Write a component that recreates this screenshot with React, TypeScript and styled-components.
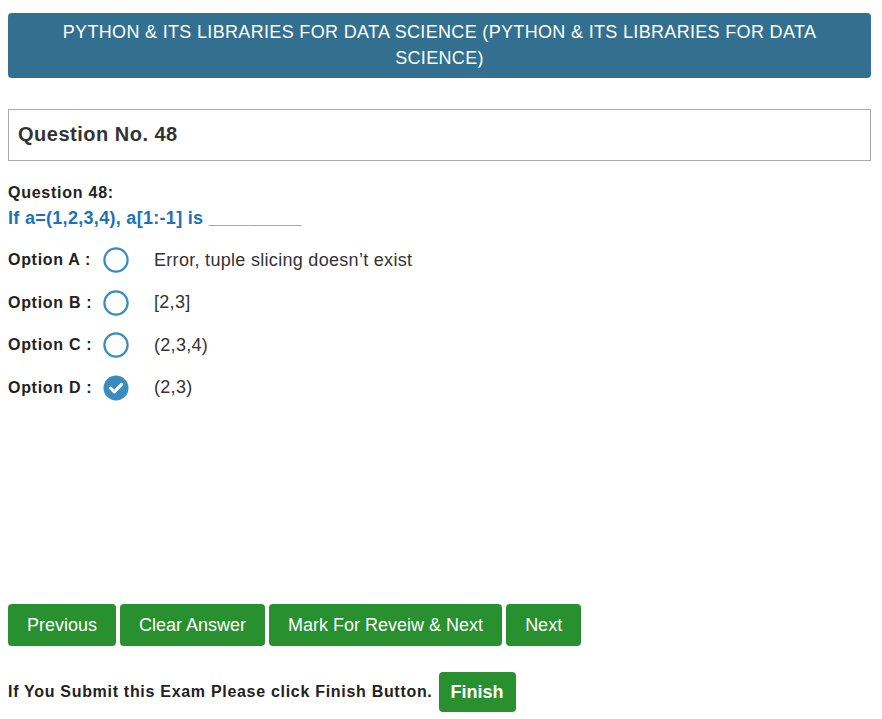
import { FC, useState } from 'react';
import styled, { createGlobalStyle } from 'styled-components';

const GlobalStyle = createGlobalStyle`
  body {
    margin: 8px;
    background: #fff;
    font-family: 'Liberation Sans', Arial, sans-serif;
    color: #333;
  }
`;

interface OptionType {
  key: string;
  text: string;
}

const options: OptionType[] = [
  { key: 'A', text: 'Error, tuple slicing doesn’t exist' },
  { key: 'B', text: '[2,3]' },
  { key: 'C', text: '(2,3,4)' },
  { key: 'D', text: '(2,3)' },
];

const RadioIcon: FC<{ checked: boolean }> = ({ checked }) =>
  checked ? (
    <svg width="26" height="26" viewBox="0 0 26 26">
      <circle cx="13" cy="13" r="12.5" fill="#3a8cc0" />
      <path
        d="M7.5 13.2 L11.3 16.8 L18.6 9.4"
        fill="none"
        stroke="#fff"
        strokeWidth="3.2"
        strokeLinecap="round"
        strokeLinejoin="round"
      />
    </svg>
  ) : (
    <svg width="26" height="26" viewBox="0 0 26 26">
      <circle cx="13" cy="13" r="11.6" fill="#fff" stroke="#3a8cc0" strokeWidth="2.2" />
    </svg>
  );

const App: FC = () => {
  const [selected, setSelected] = useState('D');

  return (
    <Page>
      <GlobalStyle />
      <Header>
        PYTHON &amp; ITS LIBRARIES FOR DATA SCIENCE (PYTHON &amp; ITS LIBRARIES FOR DATA SCIENCE)
      </Header>

      <QuestionBox>Question No. 48</QuestionBox>

      <QuestionTitle>Question 48:</QuestionTitle>
      <QuestionText>If a=(1,2,3,4), a[1:-1] is _________</QuestionText>

      <OptionList>
        {options.map((opt) => (
          <OptionRow key={opt.key} onClick={() => setSelected(opt.key)}>
            <OptionLabel>Option {opt.key} :</OptionLabel>
            <RadioIcon checked={selected === opt.key} />
            <OptionText>{opt.text}</OptionText>
          </OptionRow>
        ))}
      </OptionList>

      <ButtonBar>
        <GreenButton>Previous</GreenButton>
        <GreenButton onClick={() => setSelected('')}>Clear Answer</GreenButton>
        <GreenButton>Mark For Reveiw &amp; Next</GreenButton>
        <GreenButton>Next</GreenButton>
      </ButtonBar>

      <FinishRow>
        <FinishText>If You Submit this Exam Please click Finish Button.</FinishText>
        <GreenButton $bold>Finish</GreenButton>
      </FinishRow>
    </Page>
  );
};

export default App;

const Page = styled.div`
  width: 863px;
  padding-top: 5px;
`;

const Header = styled.div`
  background-color: #337090;
  color: #fff;
  border-radius: 4px;
  text-align: center;
  font-size: 18px;
  letter-spacing: 0.33px;
  line-height: 26px;
  padding: 6px 30px 7px;
`;

const QuestionBox = styled.div`
  margin-top: 31px;
  border: 1px solid #aaa;
  padding: 12px 9px 13px;
  font-size: 20px;
  font-weight: bold;
  letter-spacing: 0.5px;
  line-height: 25px;
  color: #333;
`;

const QuestionTitle = styled.div`
  margin-top: 21px;
  font-size: 16px;
  font-weight: bold;
  letter-spacing: 0.75px;
  line-height: 22px;
  color: #222;
`;

const QuestionText = styled.div`
  margin-top: 1px;
  font-size: 18px;
  font-weight: bold;
  letter-spacing: 0.3px;
  line-height: 26px;
  color: #1b72b9;
`;

const OptionList = styled.div`
  margin-top: 8px;
  display: flex;
  flex-direction: column;
`;

const OptionRow = styled.div`
  display: flex;
  align-items: center;
  height: 42.5px;
  cursor: pointer;
`;

const OptionLabel = styled.span`
  width: 95px;
  font-size: 16px;
  font-weight: bold;
  letter-spacing: 0.7px;
  color: #222;
`;

const OptionText = styled.span`
  margin-left: 25px;
  font-size: 18px;
  letter-spacing: 0.3px;
  color: #333;
`;

const ButtonBar = styled.div`
  margin-top: 195px;
  display: flex;
  gap: 4px;
`;

const GreenButton = styled.button<{ $bold?: boolean }>`
  background-color: #28902f;
  color: #fff;
  border: none;
  border-radius: 4px;
  font-family: 'Liberation Sans', Arial, sans-serif;
  font-size: 18px;
  font-weight: ${(p) => (p.$bold ? 'bold' : 'normal')};
  line-height: 22px;
  padding: ${(p) => (p.$bold ? '9px 12px' : '10px 19px')};
  cursor: pointer;
`;

const FinishRow = styled.div`
  margin-top: 26px;
  display: flex;
  align-items: center;
  gap: 6px;
`;

const FinishText = styled.span`
  font-size: 16px;
  font-weight: bold;
  letter-spacing: 0.7px;
  color: #222;
`;
